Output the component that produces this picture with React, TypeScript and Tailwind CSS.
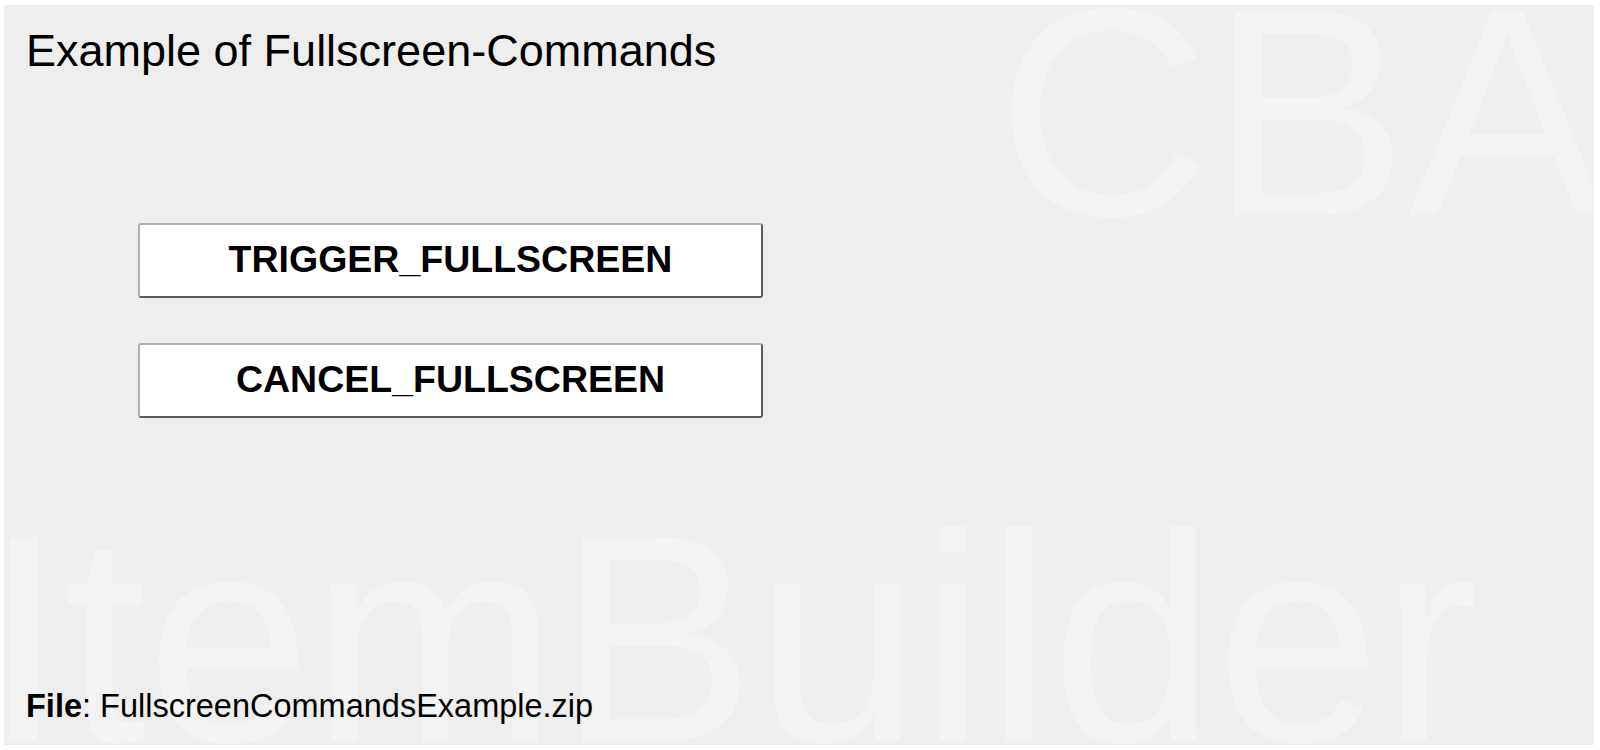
import React from "react";

const buttons = ["TRIGGER_FULLSCREEN", "CANCEL_FULLSCREEN"];

const App: React.FC = () => {
  return (
    <div className="w-[1600px] h-[750px] bg-white pt-[5px] pl-[4px] font-['Liberation_Sans',Arial,sans-serif] text-black">
      <div className="relative w-[1590px] h-[740px] bg-[#eeeeee] overflow-hidden flex flex-col px-[22px]">
        {/* watermark */}
        <div className="absolute left-[993px] top-[-40px] text-[296px] leading-none text-[#f3f3f3] whitespace-nowrap select-none">
          CBA
        </div>
        <div className="absolute left-[-22px] top-[486px] text-[296px] leading-none text-[#f3f3f3] whitespace-nowrap select-none">
          ItemBuilder
        </div>

        <h1 className="relative mt-[21px] text-[45px] leading-[50px] font-normal">
          Example of Fullscreen-Commands
        </h1>

        <div className="relative ml-[112px] mt-[147px] flex flex-col gap-[45px]">
          {buttons.map((label) => (
            <button
              key={label}
              className="w-[625px] h-[75px] bg-white rounded-[3px] border-2 border-t-[#b0b0b0] border-l-[#b0b0b0] border-b-[#5a5a5a] border-r-[#5a5a5a] flex items-center justify-center pb-[3px] text-[37.5px] font-bold"
            >
              {label}
            </button>
          ))}
        </div>

        <p className="relative mt-auto mb-[20px] text-[32.5px] leading-[37px]">
          <span className="font-bold">File</span>: FullscreenCommandsExample.zip
        </p>
      </div>
    </div>
  );
};

export default App;
